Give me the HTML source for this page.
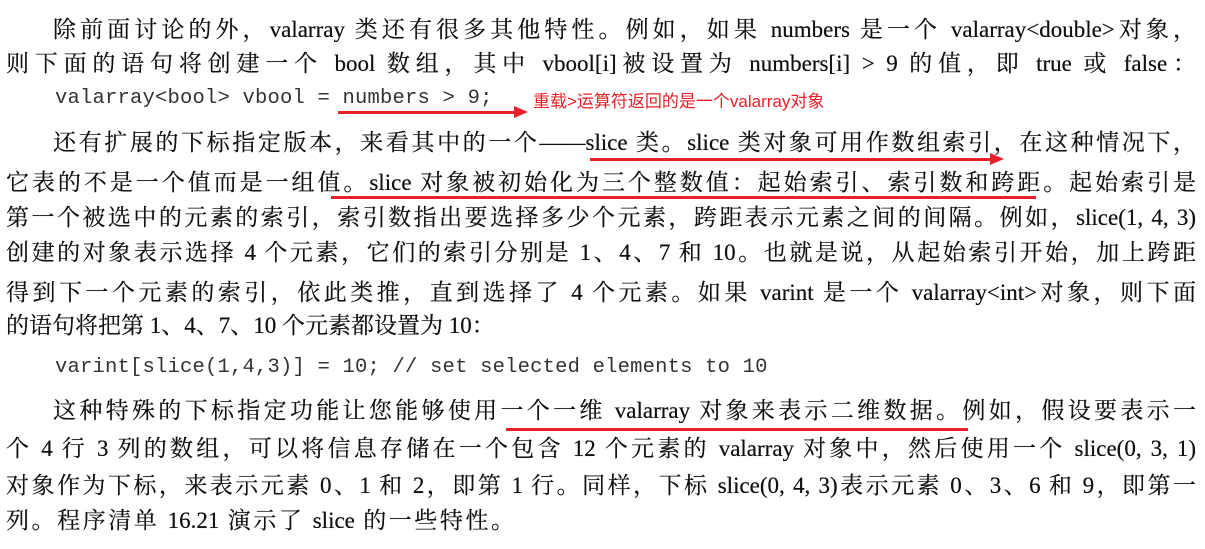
<!DOCTYPE html>
<html><head><meta charset="utf-8"><style>
body{margin:0;width:1205px;height:549px;background:#fff;overflow:hidden;position:relative;font-family:"Liberation Serif","Noto Serif CJK SC",serif;color:#111}
.l{position:absolute;left:6px;width:1190px;font-size:23px;line-height:30px;white-space:nowrap;text-align:justify;text-align-last:justify;text-shadow:0 0 0.4px #111}
.c{position:absolute;font-family:"Liberation Mono",monospace;font-size:20.5px;color:#333;white-space:nowrap;line-height:24px;letter-spacing:0.2px}
.r{position:absolute;height:3px;background:#e8202a}
.a{position:absolute;width:0;height:0;border-left:14px solid #e8202a;border-top:6px solid transparent;border-bottom:6px solid transparent}
</style></head><body>
<div class="l" style="top:15px;left:53px;width:1143px">除前面讨论的外，valarray 类还有很多其他特性。例如，如果 numbers 是一个 valarray&lt;double&gt;对象，</div>
<div class="l" style="top:49px">则下面的语句将创建一个 bool 数组，其中 vbool[i]被设置为 numbers[i] &gt; 9 的值，即 true 或 false：</div>
<div class="c" style="top:87px;left:55px">valarray&lt;bool&gt; vbool = numbers &gt; 9;</div>
<div class="r" style="left:338px;top:111px;width:180px"></div><div class="a" style="left:514px;top:106px"></div>
<div style="position:absolute;left:533px;top:87px;font-family:'Liberation Sans','Noto Sans CJK SC',sans-serif;font-size:17px;color:#e8202a">重载&gt;运算符返回的是一个valarray对象</div>
<div class="l" style="top:128px;left:53px;width:1143px">还有扩展的下标指定版本，来看其中的一个——slice 类。slice 类对象可用作数组索引，在这种情况下，</div>
<div class="r" style="left:590px;top:158px;width:400px"></div><div class="a" style="left:990px;top:153px"></div>
<div class="l" style="top:168px">它表的不是一个值而是一组值。slice 对象被初始化为三个整数值：起始索引、索引数和跨距。起始索引是</div>
<div class="r" style="left:331px;top:196px;width:705px"></div>
<div class="l" style="top:203px">第一个被选中的元素的索引，索引数指出要选择多少个元素，跨距表示元素之间的间隔。例如，slice(1, 4, 3)</div>
<div class="l" style="top:238px">创建的对象表示选择 4 个元素，它们的索引分别是 1、4、7 和 10。也就是说，从起始索引开始，加上跨距</div>
<div class="l" style="top:278px">得到下一个元素的索引，依此类推，直到选择了 4 个元素。如果 varint 是一个 valarray&lt;int&gt;对象，则下面</div>
<div class="l" style="top:311px;width:424px">的语句将把第 1、4、7、10 个元素都设置为 10：</div>
<div class="c" style="top:356px;left:55px">varint[slice(1,4,3)] = 10;  // set selected elements to 10</div>
<div class="l" style="top:396px;left:53px;width:1143px">这种特殊的下标指定功能让您能够使用一个一维 valarray 对象来表示二维数据。例如，假设要表示一</div>
<div class="r" style="left:506px;top:428px;width:462px"></div>
<div class="l" style="top:434px">个 4 行 3 列的数组，可以将信息存储在一个包含 12 个元素的 valarray 对象中，然后使用一个 slice(0, 3, 1)</div>
<div class="l" style="top:471px">对象作为下标，来表示元素 0、1 和 2，即第 1 行。同样，下标 slice(0, 4, 3)表示元素 0、3、6 和 9，即第一</div>
<div class="l" style="top:506px;width:508px">列。程序清单 16.21 演示了 slice 的一些特性。</div>
</body></html>
